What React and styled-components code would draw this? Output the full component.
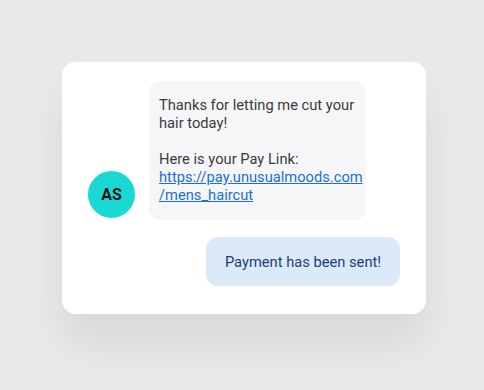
import React from 'react';
import styled, { createGlobalStyle } from 'styled-components';

const GlobalStyle = createGlobalStyle`
  html, body {
    margin: 0;
    padding: 0;
    background: #e8e9eb;
  }
  body {
    font-family: Roboto, "Noto Sans", sans-serif;
  }
`;

const Page = styled.div`
  width: 484px;
  height: 390px;
  box-sizing: border-box;
  padding: 62px 58px 0 62px;
`;

const Card = styled.div`
  width: 364px;
  height: 252px;
  box-sizing: border-box;
  background: #ffffff;
  border-radius: 14px;
  padding: 19px 26px 0 26px;
  box-shadow: 0 30px 40px rgba(0, 0, 0, 0.07);
  display: flex;
  flex-direction: column;
`;

const IncomingRow = styled.div`
  display: flex;
  align-items: flex-end;
  gap: 14px;
`;

const Avatar = styled.div`
  width: 47px;
  height: 47px;
  border-radius: 50%;
  background: #1ad9d3;
  color: #111;
  font-weight: 700;
  font-size: 16px;
  display: flex;
  align-items: center;
  justify-content: center;
  margin-bottom: 2px;
  flex-shrink: 0;
`;

const Bubble = styled.div`
  border-radius: 12px;
  background: ${p => (p.$mine ? '#dce9f8' : '#f4f6f8')};
  color: ${p => (p.$mine ? '#1b3f78' : '#3c3c3c')};
  font-size: 14.7px;
  line-height: 18px;
  white-space: nowrap;
`;

const GrayBubble = styled(Bubble)`
  width: 217px;
  box-sizing: border-box;
  padding: 15px 10px 16px 10px;
`;

const Link = styled.a`
  color: #1c6fd6;
  text-decoration: underline;
`;

const OutgoingRow = styled.div`
  display: flex;
  justify-content: flex-end;
  margin-top: 17px;
`;

const BlueBubble = styled(Bubble)`
  width: 194px;
  height: 49px;
  display: flex;
  align-items: center;
  justify-content: center;
`;

export default function App() {
  return (
    <>
      <GlobalStyle />
      <Page>
        <Card>
          <IncomingRow>
            <Avatar>AS</Avatar>
            <GrayBubble>
              Thanks for letting me cut your
              <br />
              hair today!
              <br />
              <br />
              Here is your Pay Link:
              <br />
              <Link href="#">
                https://pay.unusualmoods.com
                <br />
                /mens_haircut
              </Link>
            </GrayBubble>
          </IncomingRow>
          <OutgoingRow>
            <BlueBubble $mine>Payment has been sent!</BlueBubble>
          </OutgoingRow>
        </Card>
      </Page>
    </>
  );
}
